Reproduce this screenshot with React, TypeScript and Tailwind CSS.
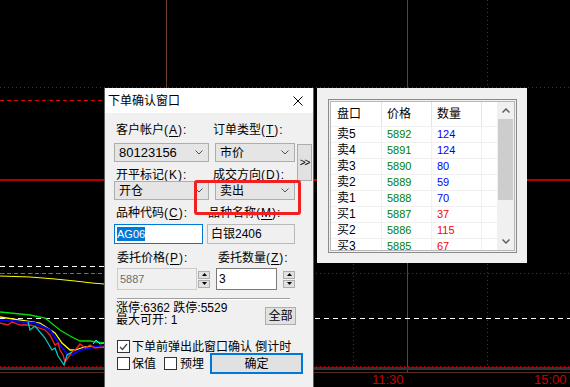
import React from 'react';

const font = "[font-family:'Liberation_Sans','Noto_Sans_CJK_SC',sans-serif]";

type Row = { name: string; price: string; vol: string; volColor: string };

const book: Row[] = [
  { name: '卖5', price: '5892', vol: '124', volColor: 'text-[#0000ff]' },
  { name: '卖4', price: '5891', vol: '124', volColor: 'text-[#0000ff]' },
  { name: '卖3', price: '5890', vol: '80', volColor: 'text-[#0000ff]' },
  { name: '卖2', price: '5889', vol: '59', volColor: 'text-[#0000ff]' },
  { name: '卖1', price: '5888', vol: '70', volColor: 'text-[#0000ff]' },
  { name: '买1', price: '5887', vol: '37', volColor: 'text-[#ff0000]' },
  { name: '买2', price: '5886', vol: '115', volColor: 'text-[#ff0000]' },
  { name: '买3', price: '5885', vol: '67', volColor: 'text-[#ff0000]' },
];

function Label({ text, k }: { text: string; k: string }) {
  return (
    <div className="whitespace-nowrap text-[12px] leading-[16px] text-black">
      {text}
      <span className="tracking-[1px]">
        (<span className="underline underline-offset-2">{k}</span>):
      </span>
    </div>
  );
}

function Chevron() {
  return (
    <svg width="8" height="5" viewBox="0 0 8 5">
      <path d="M0.5 0.5 L4 4 L7.5 0.5" fill="none" stroke="#505050" />
    </svg>
  );
}

function Combo({ value, w, num }: { value: string; w: string; num?: boolean }) {
  return (
    <div className={`flex h-[19px] items-center justify-between border border-[#adadad] bg-[#e5e5e5] pl-[4px] pr-[5px] ${w}`}>
      <span className={num ? 'text-[13px] leading-[16px]' : 'text-[12px] leading-[16px]'}>{value}</span>
      <Chevron />
    </div>
  );
}

function Spinner() {
  return (
    <div className="flex h-[22px] w-[12px] flex-col justify-center gap-[1px]">
      <div className="flex h-[8px] items-center justify-center border border-[#adadad] bg-[#e1e1e1]">
        <svg width="5" height="3" viewBox="0 0 5 3">
          <path d="M2.5 0 L5 3 L0 3 Z" fill="#000" />
        </svg>
      </div>
      <div className="flex h-[8px] items-center justify-center border border-[#adadad] bg-[#e1e1e1]">
        <svg width="5" height="3" viewBox="0 0 5 3">
          <path d="M0 0 L5 0 L2.5 3 Z" fill="#000" />
        </svg>
      </div>
    </div>
  );
}

function Check({ checked }: { checked?: boolean }) {
  return (
    <div className="flex h-[13px] w-[13px] items-center justify-center border border-[#333333] bg-white">
      {checked && (
        <svg width="9" height="8" viewBox="0 0 9 8">
          <path d="M1 4 L3.5 6.5 L8 1" fill="none" stroke="#444" strokeWidth="1.2" />
        </svg>
      )}
    </div>
  );
}

function Chart() {
  return (
    <svg className="absolute inset-0" width="570" height="387" viewBox="0 0 570 387">
      <line x1="166.5" y1="0" x2="166.5" y2="372" stroke="#6b3f2a" />
      <line x1="407.5" y1="0" x2="407.5" y2="372" stroke="#6b3f2a" />
      <line x1="487.5" y1="0" x2="487.5" y2="366" stroke="#c00000" strokeDasharray="1 3" />
      <line x1="353.5" y1="88" x2="353.5" y2="366" stroke="#c00000" strokeDasharray="1 3" />
      <line x1="0" y1="87.5" x2="570" y2="87.5" stroke="#c00000" strokeDasharray="1 3" />
      <line x1="0" y1="100.5" x2="104" y2="100.5" stroke="#e00000" strokeDasharray="4 3" />
      <rect x="0" y="179" width="570" height="2" fill="#b50000" />
      <line x1="0" y1="266.5" x2="104" y2="266.5" stroke="#ffffff" strokeDasharray="5 4" />
      <line x1="0" y1="273.5" x2="570" y2="273.5" stroke="#c00000" strokeDasharray="1 3" />
      <line x1="0" y1="273.5" x2="104" y2="273.5" stroke="#00c000" strokeDasharray="4 3" />
      <polyline points="0,276 30,277 55,279 75,281 92,283 104,284" fill="none" stroke="#ffff00" />
      <line x1="0" y1="318.5" x2="570" y2="318.5" stroke="#ffffff" strokeDasharray="5 4" />
      <polyline points="0,312 30,315 45,318 60,330 70,336 80,341 90,341 104,343" fill="none" stroke="#00e000" strokeWidth="1.3" />
      <polyline points="0,317 40,323 55,333 62,343 70,350 75,350 85,347 104,347" fill="none" stroke="#ffff00" strokeWidth="1.3" />
      <polyline points="0,320 35,323 50,330 60,345 68,355 72,355 80,350 95,347 104,346" fill="none" stroke="#0000ff" strokeWidth="2" />
      <polyline points="0,323 8,325 12,322 20,325 30,325 45,330 50,335 55,345 58,343 60,350 63,355 65,362 68,358 72,352 76,349 80,344 85,348 90,345 95,348 104,347" fill="none" stroke="#ff2020" strokeWidth="1.3" />
      <polyline points="28,322 30,330 35,326 45,338 52,350 55,348 58,356 62,362 64,365 67,355 72,352" fill="none" stroke="#00d0d0" strokeWidth="1.2" />
      <polyline points="93,344 96,340 100,344 104,343" fill="none" stroke="#00ffff" />
      <line x1="0" y1="366.5" x2="570" y2="366.5" stroke="#c00000" strokeDasharray="1 3" />
      <rect x="0" y="367" width="570" height="3" fill="#333333" />
      <line x1="0" y1="372.5" x2="570" y2="372.5" stroke="#5a2a1a" />
    </svg>
  );
}

function Dialog() {
  return (
    <div className="absolute left-[104px] top-[88px] h-[300px] w-[210px] border-x border-[#5f5f5f] bg-[#f0f0f0]">
      <div className="flex h-[25px] items-center justify-between bg-white pl-[3px] pr-[10px]">
        <span className="text-[12px] leading-[16px]">下单确认窗口</span>
        <svg width="10" height="10" viewBox="0 0 10 10">
          <path d="M0.5 0.5 L9.5 9.5 M9.5 0.5 L0.5 9.5" stroke="#000" />
        </svg>
      </div>

      <div className="pl-[9px]">
        <div className="grid grid-cols-[101px_82px_15px] grid-rows-[30px_19px_19px_19px]">
          <div className="pl-[2px] pt-[9px]">
            <Label text="客户帐户" k="A" />
          </div>
          <div className="-ml-[2px] pt-[9px]">
            <Label text="订单类型" k="T" />
          </div>
          <div />
          <Combo value="80123156" w="w-[95px]" num />
          <Combo value="市价" w="w-[80px]" />
          <div className="row-span-2 mt-[1px] flex items-center justify-center border border-[#adadad] bg-[#e1e1e1] text-[10px] tracking-[-1px]">
            &gt;&gt;
          </div>
          <div className="pl-[2px] pt-[5px]">
            <Label text="开平标记" k="K" />
          </div>
          <div className="-ml-[2px] pt-[5px]">
            <Label text="成交方向" k="D" />
          </div>
          <Combo value="开仓" w="w-[95px]" />
          <Combo value="卖出" w="w-[80px]" />
          <div />
        </div>

        <div className="flex h-[24px] pt-[5px]">
          <div className="w-[94px] pl-[2px]">
            <Label text="品种代码" k="C" />
          </div>
          <Label text="品种名称" k="M" />
        </div>
        <div className="flex h-[20px]">
          <div className="flex w-[89px] items-center border border-[#0078d7] bg-white pl-[2px]">
            <span className="bg-[#0078d7] text-[11px] leading-[14px] text-white">AG06</span>
          </div>
          <div className="ml-[4px] flex w-[88px] items-center border border-[#b9b9b9] bg-[#f0f0f0] pl-[3px] text-[12px] leading-[16px]">
            白银2406
          </div>
        </div>

        <div className="flex h-[24px] pt-[6px]">
          <div className="w-[104px] pl-[3px]">
            <Label text="委托价格" k="P" />
          </div>
          <Label text="委托数量" k="Z" />
        </div>
        <div className="flex h-[22px]">
          <div className="ml-[3px] flex w-[80px] items-center border border-[#cccccc] bg-[#f0f0f0] pl-[2px] text-[11px] text-[#6d6d6d]">
            5887
          </div>
          <div className="ml-[1px]">
            <Spinner />
          </div>
          <div className="ml-[6px] flex w-[61px] items-center border border-[#7a7a7a] bg-white pl-[2px] text-[12px]">
            3
          </div>
          <div className="ml-[6px]">
            <Spinner />
          </div>
        </div>

        <div className="ml-[3px] mt-[8px] h-[2px] w-[173px] border-b border-t border-b-white border-t-[#a0a0a0]" />

        <div className="mt-[2px] flex">
          <div className="w-[151px] pl-[2px] text-[12px] leading-[12px]">
            <div>涨停:6362 跌停:5529</div>
            <div>最大可开: 1</div>
          </div>
          <div className="mt-[5px] flex h-[18px] w-[31px] items-center justify-center border border-[#adadad] bg-[#e1e1e1] text-[12px]">
            全部
          </div>
        </div>

        <div className="ml-[3px] mt-[14px] flex h-[13px] items-center gap-[2px]">
          <Check checked />
          <span className="text-[12px] leading-[16px]">下单前弹出此窗口确认 倒计时</span>
        </div>

        <div className="ml-[3px] flex h-[21px] items-center">
          <div className="flex w-[47px] items-center gap-[2px]">
            <Check />
            <span className="text-[12px] leading-[16px]">保值</span>
          </div>
          <div className="flex w-[46px] items-center gap-[3px]">
            <Check />
            <span className="text-[12px] leading-[16px]">预埋</span>
          </div>
          <div className="flex h-[21px] w-[93px] items-center justify-center border-2 border-[#0078d7] bg-[#e1e1e1] text-[12px]">
            确定
          </div>
        </div>
      </div>
    </div>
  );
}

function Panel() {
  return (
    <div className="absolute left-[317px] top-[88px] h-[175px] w-[210px] bg-[#f0f0f0] pb-[10px] pl-[11px] pr-[10px] pt-[11px]">
      <div className="h-full border border-[#8a8a8a] bg-[#f0f0f0] p-[1px]">
        <div className="flex h-full overflow-hidden border border-[#b8b8b8] bg-white">
          <div className="flex-1 text-[12px]">
            <div className="flex h-[24px] items-center">
              <div className="flex h-full w-[51px] items-center border-r border-[#e5e5e5] pl-[6px]">盘口</div>
              <div className="flex h-full w-[50px] items-center border-r border-[#e5e5e5] pl-[5px]">价格</div>
              <div className="flex h-full w-[50px] items-center border-r border-[#e5e5e5] pl-[5px]">数量</div>
              <div className="h-full flex-1" />
            </div>
            {book.map(r => (
              <div key={r.name} className="flex h-[16px] items-center border-t border-[#f0f0f0]">
                <div className="flex h-full w-[51px] items-center border-r border-[#f0f0f0] pl-[6px] leading-[15px]">{r.name}</div>
                <div className="flex h-full w-[50px] items-center border-r border-[#f0f0f0] pl-[5px] text-[11px] text-[#008000]">{r.price}</div>
                <div className={`flex h-full w-[50px] items-center border-r border-[#f0f0f0] pl-[5px] text-[11px] ${r.volColor}`}>{r.vol}</div>
                <div className="h-full flex-1" />
              </div>
            ))}
          </div>
          <div className="flex w-[17px] flex-col bg-[#f0f0f0]">
            <div className="flex h-[17px] items-center justify-center">
              <svg width="8" height="5" viewBox="0 0 8 5">
                <path d="M0.5 4.5 L4 1 L7.5 4.5" fill="none" stroke="#606060" strokeWidth="1.5" />
              </svg>
            </div>
            <div className="mx-[1px] h-[81px] bg-[#cdcdcd]" />
            <div className="flex-1" />
            <div className="flex h-[17px] items-center justify-center">
              <svg width="8" height="5" viewBox="0 0 8 5">
                <path d="M0.5 0.5 L4 4 L7.5 0.5" fill="none" stroke="#606060" strokeWidth="1.5" />
              </svg>
            </div>
          </div>
        </div>
      </div>
    </div>
  );
}

export default function App() {
  return (
    <div className={`relative h-[387px] w-[570px] overflow-hidden bg-black text-black ${font}`}>
      <Chart />
      <Dialog />
      <Panel />
      <div className="absolute left-[194px] top-[180px] h-[35px] w-[107px] rounded-[3px] border-[3px] border-[#f02020]" />
      <span className="absolute left-[372px] top-[373px] text-[13px] leading-[14px] text-[#c80000]">11:30</span>
      <span className="absolute left-[534px] top-[373px] text-[13px] leading-[14px] text-[#c80000]">15:00</span>
    </div>
  );
}
